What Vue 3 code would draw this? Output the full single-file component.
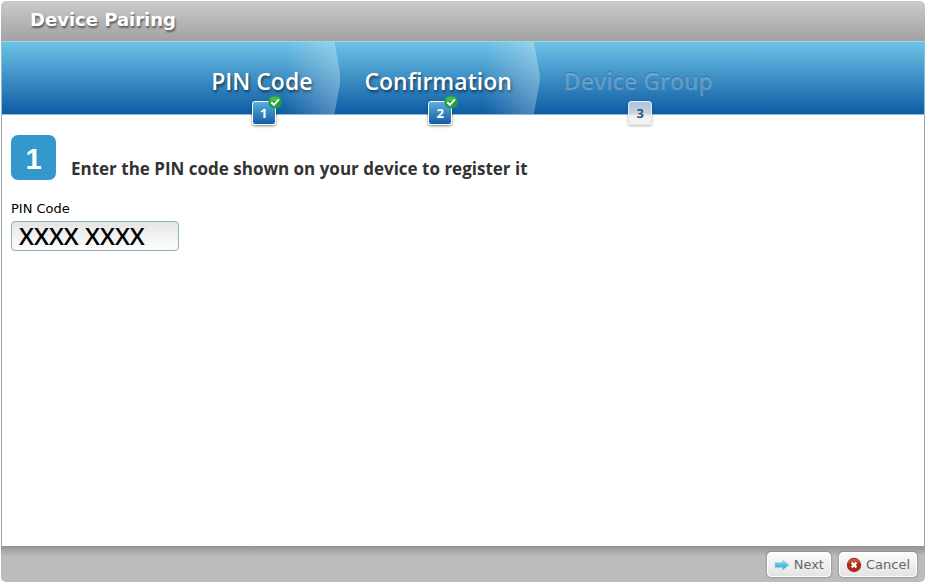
<template>
    <div class="dialog">
        <header class="dialog-header">
            <h1>Device Pairing</h1>
        </header>

        <ol class="steps">
            <li
                v-for="(step, index) in steps"
                :key="step.title"
                :class="['step', { 'is-disabled': !step.done }]"
            >
                <span class="step-title">{{ step.title }}</span>
                <span class="step-badge">
                    {{ index + 1 }}
                    <svg v-if="step.done" class="step-check" width="14" height="14" viewBox="0 0 14 14">
                        <circle cx="7" cy="7" r="6.7" fill="#1fa03c"/>
                        <path d="M1.2 5.5A6.2 6.2 0 0 1 12.8 5.5Q7 7 1.2 5.5Z" fill="#3fbc55"/>
                        <path d="M3.2 7.2L6 9.8L10.9 4.3" fill="none" stroke="#fff" stroke-width="2"/>
                    </svg>
                </span>
            </li>
        </ol>

        <form id="pairing" class="dialog-body" @submit.prevent>
            <div class="intro">
                <span class="intro-number">1</span>
                <h2>Enter the PIN code shown on your device to register it</h2>
            </div>
            <label for="pin">PIN Code</label>
            <input id="pin" v-model="pin" type="text" autocomplete="off" spellcheck="false">
        </form>

        <footer class="dialog-footer">
            <button type="submit" form="pairing">
                <svg width="16" height="16" viewBox="0 0 16 16">
                    <defs>
                        <linearGradient id="arrow-fill" x1="0" y1="0" x2="0" y2="1">
                            <stop offset="0" stop-color="#8fe3f5"/>
                            <stop offset="1" stop-color="#239cc4"/>
                        </linearGradient>
                    </defs>
                    <path d="M1 5.5H8.5V3L15 8L8.5 13V10.5H1Z" fill="url(#arrow-fill)" stroke="#9bd3e4" stroke-width="0.6"/>
                </svg>
                Next
            </button>
            <button type="button">
                <svg width="16" height="16" viewBox="0 0 16 16">
                    <circle cx="8" cy="8" r="7.2" fill="#a92c18"/>
                    <path d="M1.8 6.5A6.4 6.4 0 0 1 14.2 6.5Q8 4 1.8 6.5Z" fill="#c4553d"/>
                    <path d="M5.6 5.6L10.4 10.4M10.4 5.6L5.6 10.4" stroke="#fff" stroke-width="2.2"/>
                </svg>
                Cancel
            </button>
        </footer>
    </div>
</template>

<script setup>
import { ref } from 'vue';

const pin = ref('XXXX XXXX');

const steps = [
    { title: 'PIN Code', done: true },
    { title: 'Confirmation', done: true },
    { title: 'Device Group', done: false }
];
</script>

<style>
body {
    margin: 0;
    background: #fff;
}
</style>

<style scoped>
.dialog {
    box-sizing: border-box;
    display: flex;
    flex-direction: column;
    min-height: calc(100vh - 2px);
    margin: 1px;
    border-radius: 5px;
    overflow: hidden;
    font-family: Verdana, "DejaVu Sans", sans-serif;
}

.dialog-header {
    box-sizing: border-box;
    height: 40px;
    padding: 0 29px;
    background: linear-gradient(#cbcbcb, #a2a2a2);
}

h1 {
    margin: 0;
    font-size: 18px;
    line-height: 37px;
    color: #fff;
    text-shadow: 1px 2px 2px rgba(0, 0, 0, 0.5);
}

/* Wizard steps */
.steps {
    display: flex;
    justify-content: center;
    height: 72px;
    margin: 0;
    padding: 0 0 0 2px;
    list-style: none;
    border: 1px solid #8fbdd2;
    border-top-color: #a5d3e6;
    background: linear-gradient(#6cc2e6, #0e5ca4);
}

.step {
    position: relative;
    padding: 0 28px 0 24px;
    font-family: "Trebuchet MS", "Open Sans", sans-serif;
    font-weight: 600;
    color: #fff;
}

.step:not(:last-child)::after {
    content: "";
    position: absolute;
    top: 0;
    right: 0;
    bottom: 0;
    width: 56px;
    background: linear-gradient(to right, transparent, rgba(255, 255, 255, 0.3));
    clip-path: polygon(0 0, 50px 0, 56px 46%, 56px 54%, 50px 100%, 0 100%);
}

.step-title {
    display: block;
    font-size: 23px;
    line-height: 78px;
    white-space: nowrap;
    text-shadow: 1px 2px 3px rgba(0, 0, 0, 0.6);
}

.step-badge {
    position: absolute;
    z-index: 1;
    left: 50%;
    bottom: -11px;
    box-sizing: border-box;
    width: 24px;
    height: 24px;
    margin-left: -12px;
    border: 1px solid #fff;
    border-radius: 3px;
    background: linear-gradient(#5aaedb, #125ea5);
    box-shadow: 0 1px 3px rgba(0, 0, 0, 0.5);
    font-size: 13px;
    font-weight: bold;
    line-height: 23px;
    text-align: center;
}

.step-check {
    position: absolute;
    top: -7px;
    right: -7px;
}

.is-disabled .step-title {
    color: rgba(255, 255, 255, 0.28);
    text-shadow: 0 -1px 1px rgba(0, 50, 100, 0.25);
}

.is-disabled .step-badge {
    border-color: #e8edf2;
    background: linear-gradient(#a9c4dc, #c5d3e2 50%, #f2f2f2 64%, #f2f2f2);
    box-shadow: 0 1px 3px rgba(0, 0, 0, 0.3);
    color: #3c5367;
}

/* Content */
.dialog-body {
    flex: 1;
    padding: 20px 9px;
    border: 1px solid #a0a4a6;
    border-width: 0 1px;
    background: #fff;
}

.intro {
    display: flex;
    align-items: flex-end;
    gap: 15px;
}

.intro-number {
    width: 45px;
    height: 45px;
    border-radius: 7px;
    background: #3399cc;
    font-family: Arial, "Liberation Sans", sans-serif;
    font-size: 29px;
    font-weight: bold;
    line-height: 48px;
    text-align: center;
    color: #fff;
}

h2 {
    margin: 0;
    font-family: "Trebuchet MS", "Open Sans", sans-serif;
    font-size: 17px;
    font-weight: 700;
    line-height: 23px;
    color: #333;
}

label {
    display: block;
    margin-top: 20px;
    font-size: 13px;
    line-height: 17px;
    color: #000;
}

#pin {
    display: block;
    box-sizing: border-box;
    width: 168px;
    height: 30px;
    margin-top: 4px;
    padding: 0 7px 2px;
    border: 1px solid #8fb0bd;
    border-radius: 4px;
    background: linear-gradient(#e4e4e4, #fafafa 80%);
    font-family: "Trebuchet MS", "Open Sans", sans-serif;
    font-size: 24px;
    font-weight: 600;
    color: #000;
}

/* Actions */
.dialog-footer {
    box-sizing: border-box;
    display: flex;
    justify-content: flex-end;
    gap: 8px;
    height: 36px;
    padding: 6px 8px;
    background: linear-gradient(#929292, #bcbcbc 10px);
}

button {
    box-sizing: border-box;
    display: flex;
    align-items: center;
    gap: 4px;
    height: 25px;
    padding: 0 6px;
    border: 1px solid #fff;
    border-radius: 4px;
    background: linear-gradient(#fbfbfb, #e4e4e4);
    box-shadow: 0 0 2px rgba(0, 0, 0, 0.5);
    font-family: Verdana, "DejaVu Sans", sans-serif;
    font-size: 13px;
    color: #666;
    cursor: pointer;
}
</style>
